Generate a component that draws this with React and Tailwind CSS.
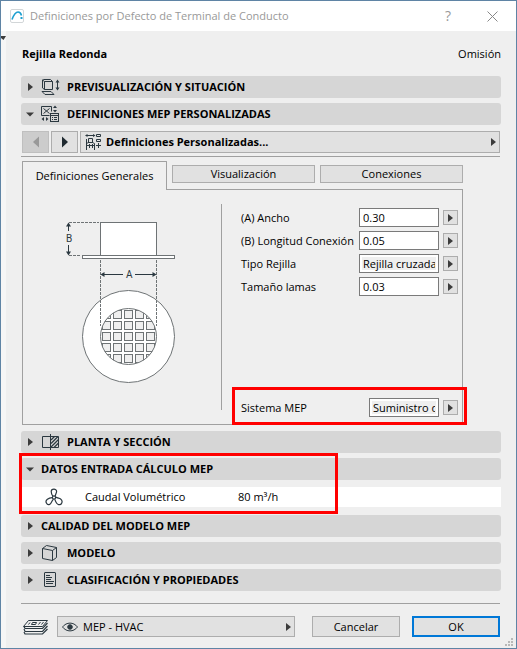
import { useState } from 'react'

function TriRight({ className = 'text-[#3c3c3c]' }) {
  return (
    <svg width="5" height="8" viewBox="0 0 5 8" className={`shrink-0 ${className}`} aria-hidden="true">
      <path d="M0 0 L5 4 L0 8 Z" fill="currentColor" />
    </svg>
  )
}

function TriDown() {
  return (
    <svg width="8" height="5" viewBox="0 0 8 5" className="shrink-0 text-[#3c3c3c]" aria-hidden="true">
      <path d="M0 0.5 H8 L4 4.5 Z" fill="currentColor" />
    </svg>
  )
}

// ─── Icons ───────────────────────────────────────────────────────────────────

function Icon({ children, width = 18, height = 18 }) {
  return (
    <svg
      width={width}
      height={height}
      viewBox={`0 0 ${width} ${height}`}
      fill="none"
      stroke="#2b3840"
      strokeWidth="1"
      className="shrink-0"
      aria-hidden="true"
    >
      {children}
    </svg>
  )
}

function PreviewIcon() {
  return (
    <Icon width={19}>
      <path d="M3.5 3.5 H11.5 V11.5 H3.5 Z" />
      <path d="M3.5 3.5 L1.5 2 L2.5 1.5 H9.5 L11.5 3.5 M1.5 2 V10 L3.5 11.5" />
      <path d="M1 13.5 H10 L13 16.5 H4 Z" />
      <path d="M16.5 3 V11" />
      <path d="M14.5 4.5 L16.5 1.5 L18.5 4.5 Z M14.5 9.5 L16.5 12.5 L18.5 9.5 Z" fill="#2b3840" stroke="none" />
    </Icon>
  )
}

function SettingsIcon() {
  return (
    <Icon>
      <path d="M8.5 10.5 H0.5 V1.5 H10.5 V6.5" />
      <path d="M2.5 3.5 L8.5 8.5 M8.5 3.5 L2.5 8.5" />
      <rect x="9.5" y="8.5" width="8" height="8" fill="#d6d6d6" />
      <path d="M9 10.5 H18 M11 12.5 H12 M13 12.5 H16 M11 14.5 H12 M13 14.5 H16" />
      <path d="M12 3 L14 0.5 L16 3 Z M12 5 L14 7.5 L16 5 Z" fill="#2b3840" stroke="none" />
      <path d="M3 12 L0.5 14 L3 16 Z M5 12 L7.5 14 L5 16 Z" fill="#2b3840" stroke="none" />
    </Icon>
  )
}

function ChairIcon() {
  return (
    <Icon>
      <path d="M1 2.5 H9" />
      <path d="M2.5 1 L0 2.5 L2.5 4 Z M8 1 L10.5 2.5 L8 4 Z" fill="#2b3840" stroke="none" />
      <path d="M3.5 10 V5.5 H7.5 V10 M1.5 6 V17 M1.5 10.5 L3.5 9.5 H7.5 L9.5 10.5 V17 M4.5 11 V15 M7.5 11 V15 M2 12.5 H9" />
      <path d="M11.5 1.5 H15.5 V3.5 H11.5 Z M11.5 6.5 H15.5 V8.5 H11.5 Z" />
      <path d="M11 12.5 H16 M13.5 10 V15" />
    </Icon>
  )
}

function PlanIcon() {
  return (
    <Icon>
      <path d="M9.5 3.5 H1.5 V14.5 H9.5" />
      <path d="M9.5 1 V17" />
      <path d="M9.5 3.5 H17.5 V14.5 H9.5" />
      <path d="M10 7 L13.5 3.5 M10 10.5 L17 3.5 M10 14 L17.5 6.5 M13 14.5 L17.5 10" strokeWidth="1.2" />
    </Icon>
  )
}

function FanIcon() {
  return (
    <Icon>
      <g strokeWidth="1.2">
        <circle cx="9" cy="9.5" r="1.6" />
        <path d="M7.8 8.2 C6.6 6.4 6.2 5 6.2 3.6 C6.2 0.4 11.6 0.4 11.6 3.2 C11.6 5 10.4 6.2 10.2 8.2" />
        <path d="M7.2 9.6 C5 9.8 3.8 10.2 2.4 11.2 C-0.6 13.4 2 17.6 4.6 16.4 C6.6 15.4 6.4 13 8.4 11.4" />
        <path d="M10.6 9 C12.6 10.4 14.2 10 15.6 11 C18.6 13.2 16.4 17.4 13.6 16.6 C11.4 16 10.6 13.6 9.8 11.4" />
      </g>
    </Icon>
  )
}

function CubeIcon() {
  return (
    <Icon>
      <path d="M1.5 4.5 L11.5 6.5 V16.5 L1.5 14.5 Z" />
      <path d="M1.5 4.5 L5.5 1.5 L15.5 3.5 L11.5 6.5 M15.5 3.5 V13.5 L11.5 16.5" />
    </Icon>
  )
}

function DocIcon() {
  return (
    <Icon>
      <rect x="3.5" y="1.5" width="11" height="14" rx="0.5" />
      <path d="M5 4.5 H9 M5 6.5 H11 M5 8.5 H10 M5 10.5 H13 M5 12.5 H12" />
    </Icon>
  )
}

function LayersIcon() {
  return (
    <Icon width={26} height={16}>
      <path d="M5.5 1.5 H24.5 L19.5 7.5 H0.5 Z" />
      <path d="M9.5 3.5 H13.5 L12.5 5.5 H8.5 Z M15.5 5.5 L17.5 3 M18.5 5.5 L20.5 3 M5.5 5.5 L7 3.5" />
      <path d="M1 7.5 L2 9.5 H19.5 L24.5 4 M1 10 L2 12.5 H19.5 L24.5 7 M1 13 L2 15 H19.5 L24.5 10" strokeWidth="1.2" />
    </Icon>
  )
}

function EyeIcon() {
  return (
    <Icon width={16} height={10}>
      <path d="M0.5 5 C4.5 -0.2 11.5 -0.2 15.5 5 C11.5 10.2 4.5 10.2 0.5 5 Z" />
      <circle cx="8" cy="5" r="2.3" fill="#2b3840" />
    </Icon>
  )
}

function AppLogo() {
  return (
    <svg width="14" height="14" viewBox="0 0 14 14" fill="none" className="shrink-0" aria-hidden="true">
      <rect x="0.5" y="0.5" width="13" height="13" rx="1.5" fill="#fff" stroke="#d2d6d8" />
      <path d="M2 10.5 C3.5 6.5 5 3 8 3 C10 3 11 4.5 11.5 6.5" stroke="#1c9fd0" strokeWidth="1.6" />
      <rect x="10.5" y="8" width="2" height="2" fill="#1c9fd0" />
    </svg>
  )
}

// ─── Duct terminal diagram ───────────────────────────────────────────────────

const CELLS = [0, 11, 22, 33, 44]

function GrilleDiagram() {
  return (
    <svg width="120" height="170" viewBox="0 0 120 170" fill="none" stroke="#6e7375" role="img" aria-label="Rejilla redonda">
      <defs>
        <clipPath id="grille">
          <circle cx="68.5" cy="120.5" r="28" />
        </clipPath>
      </defs>

      <circle cx="68.5" cy="120.5" r="46" fill="#fff" />
      <g clipPath="url(#grille)" fill="#efefef">
        {CELLS.map(y =>
          CELLS.map(x => <rect key={`${x}-${y}`} x={42.5 + x} y={94.5 + y} width="8" height="8" />)
        )}
      </g>
      <circle cx="68.5" cy="120.5" r="28" />

      <rect x="40.5" y="6.5" width="56" height="33" fill="#fff" />
      <rect x="22.5" y="39.5" width="92" height="3" fill="#fff" />

      <g strokeDasharray="3 1">
        <path d="M9 6.5 H39 M9 39.5 H21" />
        <path d="M40.5 44 V110 M96.5 44 V110" />
      </g>

      <path d="M8.5 8 V15 M8.5 29 V38 M42 58.5 H63 M75 58.5 H95" stroke="#2b3840" />
      <g fill="#2b3840" stroke="none">
        <path d="M6 10.5 L8.5 6.5 L11 10.5 Z M6 35.5 L8.5 39.5 L11 35.5 Z" />
        <path d="M44.5 56 L40.5 58.5 L44.5 61 Z M92.5 56 L96.5 58.5 L92.5 61 Z" />
        <text x="6" y="26" className="font-[Roboto] text-[10px]">B</text>
        <text x="66" y="62" className="font-[Roboto] text-[10px]">A</text>
      </g>
    </svg>
  )
}

// ─── Form pieces ─────────────────────────────────────────────────────────────

function SectionBar({ title, icon, open, onToggle }) {
  return (
    <button
      type="button"
      onClick={onToggle}
      aria-expanded={open}
      className="flex h-[22px] w-full items-center rounded-[3px] bg-[#d6d6d6] pl-[5px] text-left font-bold"
    >
      <span className="mr-[7px] flex w-2 items-center justify-center">{open ? <TriDown /> : <TriRight />}</span>
      {icon && <span className="flex w-[26px] items-center">{icon}</span>}
      <span>{title}</span>
    </button>
  )
}

function Field({ id, label, value, locked, width = 'w-[80px]', className = '' }) {
  return (
    <div className={`flex h-[19px] items-center gap-1 ${className}`}>
      <label htmlFor={id} className="flex-1 whitespace-nowrap">{label}</label>
      <input
        id={id}
        defaultValue={value}
        readOnly={locked}
        className={`h-[19px] shrink-0 border border-[#7a7a7a] px-[3px] outline-none
          ${width} ${locked ? 'bg-[#efefef] shadow-[inset_0_0_0_2px_white]' : 'bg-white'}`}
      />
      <button
        type="button"
        aria-label={`Opciones de ${label}`}
        className="flex size-[15px] shrink-0 items-center justify-center border border-[#adadad] bg-[#e1e1e1]"
      >
        <TriRight />
      </button>
    </div>
  )
}

const FIELDS = [
  { id: 'ancho', label: '(A) Ancho', value: '0.30' },
  { id: 'longitud', label: '(B) Longitud Conexión', value: '0.05' },
  { id: 'tipo', label: 'Tipo Rejilla', value: 'Rejilla cruzada', locked: true },
  { id: 'lamas', label: 'Tamaño lamas', value: '0.03' },
]

export default function App() {
  const [open, setOpen] = useState({ mep: true, datos: true })
  const toggle = key => setOpen(prev => ({ ...prev, [key]: !prev[key] }))

  return (
    <div className="relative flex min-h-screen flex-col border border-[#5f84a5] bg-[#efefef] font-['Open_Sans','Noto_Sans',sans-serif] text-[11px] leading-4 text-black">
      {/* Title bar */}
      <header className="flex h-[30px] items-center bg-white pr-[18px] pl-[9px] text-[#999]">
        <AppLogo />
        <h1 className="ml-1.5 flex-1">Definiciones por Defecto de Terminal de Conducto</h1>
        <button type="button" aria-label="Ayuda" className="mr-[36px] text-[14px]">?</button>
        <button type="button" aria-label="Cerrar">
          <svg width="11" height="11" viewBox="0 0 11 11" stroke="#888" aria-hidden="true">
            <path d="M0.5 0.5 L10.5 10.5 M10.5 0.5 L0.5 10.5" />
          </svg>
        </button>
      </header>

      <div className="flex flex-1">
        <div className="w-[5px] shrink-0 bg-[#f6f6f6] pt-[5px]">
          <svg width="5" height="4" viewBox="0 0 5 4" aria-hidden="true">
            <path d="M0 0 H5 L2.5 4 L0 2 Z" fill="#3c3c3c" />
          </svg>
        </div>

        <main className="min-w-0 flex-1 pr-[15px] pl-[15px]">
          <div className="flex h-[45px] items-center justify-between pl-px">
            <h2 className="font-bold">Rejilla Redonda</h2>
            <span>Omisión</span>
          </div>

          <div className="flex flex-col gap-[5px]">
            <SectionBar title="PREVISUALIZACIÓN Y SITUACIÓN" icon={<PreviewIcon />} open={!!open.previo} onToggle={() => toggle('previo')} />
            <SectionBar title="DEFINICIONES MEP PERSONALIZADAS" icon={<SettingsIcon />} open={open.mep} onToggle={() => toggle('mep')} />
          </div>

          {open.mep && (
            <div className="mt-1.5 mr-px mb-1.5">
              <div className="flex h-[22px] gap-0.5 pl-px">
                <button type="button" disabled aria-label="Anterior" className="flex w-[27px] items-center justify-center border border-[#bfbfbf] bg-[#cccccc]">
                  <svg width="6" height="12" viewBox="0 0 6 12" aria-hidden="true"><path d="M6 0.5 L0 6 L6 11.5 Z" fill="#999" /></svg>
                </button>
                <button type="button" aria-label="Siguiente" className="flex w-[27px] items-center justify-center border border-[#adadad] bg-[#e1e1e1]">
                  <svg width="6" height="12" viewBox="0 0 6 12" aria-hidden="true"><path d="M0 0.5 L6 6 L0 11.5 Z" fill="#1f2a30" /></svg>
                </button>
                <button type="button" className="flex flex-1 items-center border border-[#adadad] bg-[#e1e1e1] pr-[3px] pl-1 text-left font-bold">
                  <ChairIcon />
                  <span className="ml-[3px] flex-1">Definiciones Personalizadas...</span>
                  <TriRight />
                </button>
              </div>
              <hr className="mt-[3px] border-[#a0a0a0]" />

              {/* Tabs */}
              <div className="mt-1 mr-[37px] ml-px">
                <div role="tablist" className="flex h-[29px]">
                  <button type="button" role="tab" aria-selected="true" className="w-[145px] rounded-t-[1px] border-x border-t border-[#a0a0a0]">
                    Definiciones Generales
                  </button>
                  <div className="flex flex-1 items-start gap-[5px] border-b border-[#a0a0a0] pt-1 pl-[5px]">
                    <button type="button" role="tab" aria-selected="false" className="h-[18px] flex-1 border border-[#adadad] bg-[#e1e1e1]">
                      Visualización
                    </button>
                    <button type="button" role="tab" aria-selected="false" className="h-[18px] flex-1 border border-[#adadad] bg-[#e1e1e1]">
                      Conexiones
                    </button>
                  </div>
                </div>

                <div role="tabpanel" className="flex border-x border-b border-[#a0a0a0]">
                  <div className="my-[14px] w-[199px] shrink-0 border-r border-[#a0a0a0] pt-3 pl-[37px]">
                    <GrilleDiagram />
                  </div>
                  <div className="relative min-w-0 flex-1 pt-[18px] pr-1 pb-[7px] pl-[19px]">
                    <div className="flex flex-col gap-1">
                      {FIELDS.map(field => <Field key={field.id} {...field} />)}
                    </div>
                    <Field id="sistema" label="Sistema MEP" value="Suministro de Aire" locked width="w-[70px]" className="mt-[102px]" />
                    <div className="pointer-events-none absolute -right-[5px] -bottom-px left-2.5 h-[38px] border-3 border-[#ff0000]" />
                  </div>
                </div>
              </div>
            </div>
          )}

          <SectionBar title="PLANTA Y SECCIÓN" icon={<PlanIcon />} open={!!open.planta} onToggle={() => toggle('planta')} />

          <section className="relative mt-[5px]">
            <SectionBar title="DATOS ENTRADA CÁLCULO MEP" open={open.datos} onToggle={() => toggle('datos')} />
            {open.datos && (
              <table className="mt-[7px] w-full bg-white">
                <tbody>
                  <tr className="h-5">
                    <td className="w-[64px] p-0 pl-6"><FanIcon /></td>
                    <th scope="row" className="w-[153px] p-0 text-left font-normal">Caudal Volumétrico</th>
                    <td className="p-0">80 m³/h</td>
                  </tr>
                </tbody>
              </table>
            )}
            <div className="pointer-events-none absolute -top-[5px] -bottom-[7px] -left-0.5 w-[319px] border-3 border-[#ff0000]" />
          </section>

          <div className="mt-2 flex flex-col gap-[5px]">
            <SectionBar title="CALIDAD DEL MODELO MEP" open={!!open.calidad} onToggle={() => toggle('calidad')} />
            <SectionBar title="MODELO" icon={<CubeIcon />} open={!!open.modelo} onToggle={() => toggle('modelo')} />
            <SectionBar title="CLASIFICACIÓN Y PROPIEDADES" icon={<DocIcon />} open={!!open.clasificacion} onToggle={() => toggle('clasificacion')} />
          </div>

          {/* Footer */}
          <hr className="mt-3 mr-px border-[#a0a0a0]" />
          <footer className="mt-3 mr-px mb-[11px] flex h-[21px] items-center">
            <span className="ml-0.5 w-[34px]"><LayersIcon /></span>
            <div className="relative h-[21px] flex-1">
              <select aria-label="Capa" className="h-[21px] w-full appearance-none border border-[#adadad] bg-[#e1e1e1] py-0 pl-[25px]">
                <option>MEP - HVAC</option>
              </select>
              <span className="pointer-events-none absolute inset-y-0 left-[5px] flex items-center"><EyeIcon /></span>
              <span className="pointer-events-none absolute inset-y-0 right-1 flex items-center"><TriRight /></span>
            </div>
            <button type="button" className="ml-[17px] h-[21px] w-[88px] border border-[#adadad] bg-[#e1e1e1]">Cancelar</button>
            <button type="button" className="ml-3 flex h-[21px] w-[88px] items-center justify-center border-2 border-[#0078d7] bg-[#e1e1e1]">OK</button>
          </footer>
        </main>
      </div>

      {/* Resize grip */}
      <svg width="8" height="8" viewBox="0 0 8 8" fill="#b8b8b8" className="absolute right-[3px] bottom-0.5" aria-hidden="true">
        <path d="M6 0h2v2h-2z M3 3h2v2h-2z M6 3h2v2h-2z M0 6h2v2h-2z M3 6h2v2h-2z M6 6h2v2h-2z" />
      </svg>
    </div>
  )
}
